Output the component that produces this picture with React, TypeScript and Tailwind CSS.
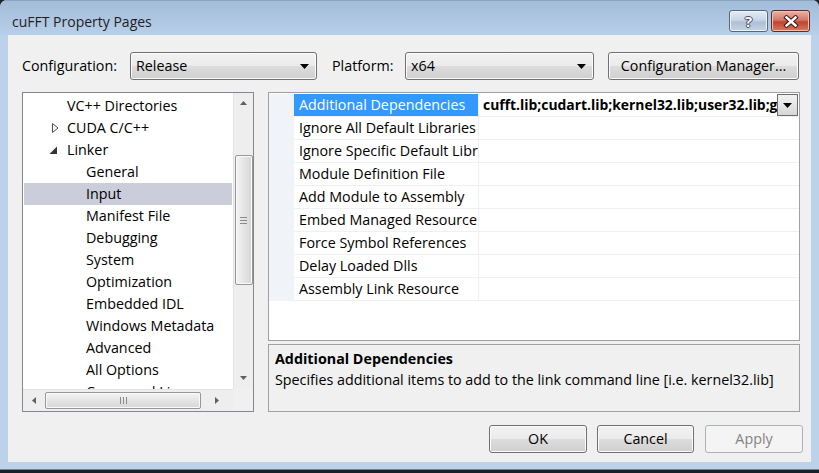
import React from "react";

const btnBase =
  "h-[28px] rounded-[3px] border border-[#707070] bg-[linear-gradient(to_bottom,#f2f2f2_0%,#ebebeb_50%,#dddddd_50%,#cfcfcf_100%)] shadow-[inset_0_0_0_1px_#fcfcfc] flex items-center text-[14.3px] text-black";

function DownArrow() {
  return (
    <svg width="9" height="5" viewBox="0 0 9 5">
      <path d="M0 0 L9 0 L4.5 5 Z" fill="#000" />
    </svg>
  );
}

function Combo({ text, w }: { text: string; w: string }) {
  return (
    <div className={`${btnBase} ${w} justify-between pl-[5px] pr-[7px]`}>
      <span>{text}</span>
      <DownArrow />
    </div>
  );
}

type TreeItem = { t: string; lvl: 1 | 2; exp?: "c" | "e"; sel?: boolean };

const tree: TreeItem[] = [
  { t: "VC++ Directories", lvl: 1 },
  { t: "CUDA C/C++", lvl: 1, exp: "c" },
  { t: "Linker", lvl: 1, exp: "e" },
  { t: "General", lvl: 2 },
  { t: "Input", lvl: 2, sel: true },
  { t: "Manifest File", lvl: 2 },
  { t: "Debugging", lvl: 2 },
  { t: "System", lvl: 2 },
  { t: "Optimization", lvl: 2 },
  { t: "Embedded IDL", lvl: 2 },
  { t: "Windows Metadata", lvl: 2 },
  { t: "Advanced", lvl: 2 },
  { t: "All Options", lvl: 2 },
  { t: "Command Line", lvl: 2 },
];

const props = [
  "Additional Dependencies",
  "Ignore All Default Libraries",
  "Ignore Specific Default Libraries",
  "Module Definition File",
  "Add Module to Assembly",
  "Embed Managed Resource File",
  "Force Symbol References",
  "Delay Loaded Dlls",
  "Assembly Link Resource",
];

function TreeRow({ item }: { item: TreeItem }) {
  return (
    <div className="h-[22px] flex">
      <div
        className={`mx-[1px] flex-1 flex items-center whitespace-nowrap overflow-hidden ${
          item.sel ? "bg-[#cbcdda]" : ""
        } ${item.lvl === 1 ? "pl-0" : "pl-[62px]"}`}
      >
        {item.lvl === 1 && (
          <div className="w-[43px] h-[22px] flex items-center">
            {item.exp === "c" && (
              <svg width="8" height="10" viewBox="0 0 8 10" className="ml-[28px]">
                <path d="M0.5 0.5 L6 5 L0.5 9.5 Z" fill="none" stroke="#505050" strokeWidth="1" />
              </svg>
            )}
            {item.exp === "e" && (
              <svg width="9" height="9" viewBox="0 0 9 9" className="ml-[25px]">
                <path d="M8 0.5 L8 8 L0.5 8 Z" fill="#333" />
              </svg>
            )}
          </div>
        )}
        <span className="text-[14.3px] text-black leading-[22px]">{item.t}</span>
      </div>
    </div>
  );
}

function Tree() {
  return (
    <div className="w-[232px] h-[320px] border border-[#828790] bg-white flex flex-col">
      <div className="flex flex-1 min-h-0">
        <div className="flex-1 overflow-hidden pt-[2px]">
          {tree.map((it) => (
            <TreeRow key={it.t} item={it} />
          ))}
        </div>
        {/* vertical scrollbar */}
        <div className="w-[20px] bg-[#eeeeee] border-l border-[#e3e3e3] flex flex-col items-center">
          <div className="h-[20px] flex items-center justify-center">
            <svg width="7" height="4" viewBox="0 0 7 4">
              <path d="M0 4 L7 4 L3.5 0 Z" fill="#606060" />
            </svg>
          </div>
          <div className="h-[42px]" />
          <div className="w-[18px] h-[130px] rounded-[2px] border border-[#979797] bg-[linear-gradient(to_right,#f4f4f4,#e4e4e4_50%,#d6d6d6)] shadow-[inset_0_0_0_1px_#fafafa] flex flex-col items-center justify-center gap-[2px]">
            <div className="w-[7px] h-[1px] bg-[#8a8a8a]" />
            <div className="w-[7px] h-[1px] bg-[#8a8a8a]" />
            <div className="w-[7px] h-[1px] bg-[#8a8a8a]" />
          </div>
          <div className="flex-1" />
          <div className="h-[22px] flex items-center justify-center">
            <svg width="7" height="4" viewBox="0 0 7 4">
              <path d="M0 0 L7 0 L3.5 4 Z" fill="#606060" />
            </svg>
          </div>
        </div>
      </div>
      {/* horizontal scrollbar */}
      <div className="h-[22px] flex">
        <div className="flex-1 bg-[#eeeeee] border-t border-[#e3e3e3] flex items-center">
          <div className="w-[22px] flex items-center justify-center">
            <svg width="4" height="7" viewBox="0 0 4 7">
              <path d="M4 0 L4 7 L0 3.5 Z" fill="#606060" />
            </svg>
          </div>
          <div className="w-[156px] h-[17px] rounded-[2px] border border-[#979797] bg-[linear-gradient(to_bottom,#f4f4f4,#e4e4e4_50%,#d6d6d6)] shadow-[inset_0_0_0_1px_#fafafa] flex items-center justify-center gap-[2px]">
            <div className="w-[1px] h-[7px] bg-[#8a8a8a]" />
            <div className="w-[1px] h-[7px] bg-[#8a8a8a]" />
            <div className="w-[1px] h-[7px] bg-[#8a8a8a]" />
          </div>
          <div className="flex-1 flex items-center justify-center">
            <svg width="4" height="7" viewBox="0 0 4 7">
              <path d="M0 0 L0 7 L4 3.5 Z" fill="#606060" />
            </svg>
          </div>
        </div>
        <div className="w-[20px] bg-[#f0f0f0]" />
      </div>
    </div>
  );
}

function Grid() {
  return (
    <div className="w-[532px] h-[249px] border border-[#a0a0a0] bg-white pt-[1px] flex flex-col">
      {props.map((p, i) => (
        <div key={p} className="h-[23px] flex">
          <div className="w-[25px] bg-[#f0f4f9]" />
          <div
            className={`w-[185px] border-b border-r border-[#eef0f4] pl-[5px] flex items-center whitespace-nowrap overflow-hidden text-[14.3px] ${
              i === 0 ? "bg-[#3399ff] text-white" : "text-black"
            }`}
          >
            {p}
          </div>
          <div className="flex-1 border-b border-[#eef0f4] flex items-center min-w-0 pr-[1px]">
            {i === 0 && (
              <>
                <div className="flex-1 min-w-0 overflow-hidden whitespace-nowrap pl-[4px] text-[13.9px] font-bold text-black">
                  cufft.lib;cudart.lib;kernel32.lib;user32.lib;gdi32.lib;winspool.lib
                </div>
                <div className="w-[21px] h-[22px] border border-[#6d6d6d] bg-[linear-gradient(to_bottom,#f2f2f2,#e6e6e6_50%,#d6d6d6)] flex items-center justify-center">
                  <DownArrow />
                </div>
              </>
            )}
          </div>
        </div>
      ))}
    </div>
  );
}

function Desc() {
  return (
    <div className="w-[532px] h-[68px] border border-[#a0a0a0] bg-[#f0f0f0] pl-[6px] pt-[3px] leading-[21px] text-[14.3px] text-black">
      <div className="font-bold">Additional Dependencies</div>
      <div>Specifies additional items to add to the link command line [i.e. kernel32.lib]</div>
    </div>
  );
}

export default function App() {
  return (
    <div className="w-[819px] h-[473px] bg-[#1c2630] font-['Open_Sans',sans-serif]">
      <div className="w-[819px] h-[473px] rounded-t-[7px] overflow-hidden flex flex-col bg-[#bbd2ea]">
        {/* title bar */}
        <div className="h-[35px] flex items-start justify-between pl-[12px] pr-[9px] bg-[linear-gradient(to_bottom,#a3bcd9,#b8cfe9)] border-t border-[#8aa2c0]">
          <div className="mt-[11px] leading-[20px] text-[14px] text-[#1e1e1e]">cuFFT Property Pages</div>
          <div className="mt-[9px] flex gap-[3px]">
            <div className="w-[39px] h-[22px] rounded-[3px] border border-[#55677f] bg-[linear-gradient(to_bottom,#e5ecf5,#c9d6e7_45%,#aebfd7_55%,#c4d3e6)] shadow-[inset_0_0_0_1px_#eef3f9] flex items-center justify-center">
              <span className="text-white font-bold text-[15px] leading-none [text-shadow:1px_0_#3e4d62,-1px_0_#3e4d62,0_1px_#3e4d62,0_-1px_#3e4d62]">
                ?
              </span>
            </div>
            <div className="w-[39px] h-[22px] rounded-[3px] border border-[#5b2a24] bg-[linear-gradient(to_bottom,#eab3a4,#d47966_45%,#c0432f_55%,#d87b5e)] shadow-[inset_0_0_0_1px_#f1c1b4] flex items-center justify-center">
              <svg width="16" height="13" viewBox="0 0 16 13">
                <path d="M3.5 2.5 L12.5 10.5 M12.5 2.5 L3.5 10.5" stroke="#3b1a16" strokeWidth="4.4" strokeLinecap="square" />
                <path d="M3.5 2.5 L12.5 10.5 M12.5 2.5 L3.5 10.5" stroke="#ffffff" strokeWidth="2.4" strokeLinecap="square" />
              </svg>
            </div>
          </div>
        </div>
        {/* content */}
        <div className="mx-[8px] h-[427px] bg-[#f0f0f0] flex flex-col text-[14.3px] text-black">
          <div className="mt-[17px] pl-[14px] flex items-center">
            <div className="w-[108px]">Configuration:</div>
            <Combo text="Release" w="w-[187px]" />
            <div className="ml-[15px] w-[73px]">Platform:</div>
            <Combo text="x64" w="w-[189px]" />
            <div className={`${btnBase} ml-[14px] w-[191px] justify-center`}>Configuration Manager...</div>
          </div>
          <div className="mt-[12px] pl-[14px] flex gap-[14px]">
            <Tree />
            <div className="flex flex-col gap-[3px]">
              <Grid />
              <Desc />
            </div>
          </div>
          <div className="mt-[13px] pr-[8px] flex justify-end">
            <div className={`${btnBase} w-[98px] justify-center border-[#3c7fb1] shadow-[inset_0_0_0_1px_#bfe3f8]`}>OK</div>
            <div className={`${btnBase} ml-[10px] w-[97px] justify-center`}>Cancel</div>
            <div className="ml-[11px] w-[98px] h-[28px] rounded-[3px] border border-[#adb2b5] bg-[#f4f4f4] flex items-center justify-center text-[14.3px] text-[#838383]">
              Apply
            </div>
          </div>
        </div>
        <div className="h-[7px]" />
        <div className="h-[1px] bg-[#4b90b8]" />
        <div className="flex-1 bg-[#17202a]" />
      </div>
    </div>
  );
}
